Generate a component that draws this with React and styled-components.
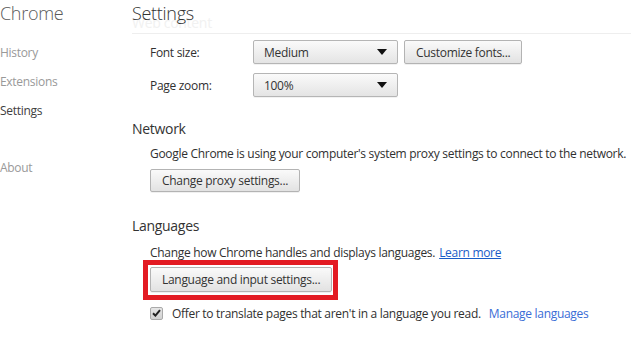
import React from 'react';
import styled, { createGlobalStyle } from 'styled-components';

const GlobalStyle = createGlobalStyle`
  html, body {
    margin: 0;
    padding: 0;
    background: #fff;
  }
  body {
    font-family: "Open Sans", "Noto Sans", "Liberation Sans", sans-serif;
    font-size: 12px;
    letter-spacing: -0.3px;
    color: #303030;
  }
`;

const Page = styled.div`
  display: flex;
  width: 631px;
  height: 340px;
  overflow: hidden;
`;

const Sidebar = styled.nav`
  width: 132px;
  flex-shrink: 0;
  display: flex;
  flex-direction: column;
`;

const Brand = styled.div`
  font-size: 18px;
  font-weight: 300;
  color: #5a5a5a;
  height: 26px;
  line-height: 26px;
  margin-bottom: 12px;
`;

const NavItem = styled.div`
  font-size: 12px;
  height: 29px;
  line-height: 29px;
  color: ${(p) => (p.active ? '#404040' : '#999')};
  margin-top: ${(p) => p.gap || 0}px;
`;

const Main = styled.main`
  flex: 1;
  display: flex;
  flex-direction: column;
`;

const Header = styled.header`
  position: relative;
  height: 33px;
  border-bottom: 1px solid #eee;
`;

const Title = styled.h1`
  position: relative;
  margin: 0;
  font-size: 18px;
  font-weight: 300;
  color: #333;
  height: 26px;
  line-height: 26px;
  z-index: 1;
`;

const Ghost = styled.div`
  position: absolute;
  left: 0;
  top: 13px;
  font-size: 14px;
  color: #f1f1f1;
`;

const Section = styled.section`
  display: flex;
  flex-direction: column;
  padding-left: 18px;
`;

const SectionTitle = styled.h2`
  margin: ${(p) => p.top || 0}px 0 0 -18px;
  font-size: 14px;
  font-weight: 400;
  color: #333;
  height: 24px;
  line-height: 24px;
`;

const Row = styled.div`
  display: flex;
  align-items: center;
  gap: 6px;
  margin-top: ${(p) => p.top || 0}px;
`;

const Label = styled.span`
  width: 97px;
`;

const Select = styled.div`
  box-sizing: border-box;
  width: 145px;
  height: 24px;
  padding: 0 10px;
  display: flex;
  align-items: center;
  justify-content: space-between;
  border: 1px solid #b5b5b5;
  border-radius: 2px;
  background: linear-gradient(#fafafa, #e4e4e4);
  box-shadow: 0 1px 0 rgba(0, 0, 0, 0.05);
  color: #333;
`;

const Arrow = styled.span`
  width: 0;
  height: 0;
  border-left: 5px solid transparent;
  border-right: 5px solid transparent;
  border-top: 6px solid #111;
`;

const Button = styled.button`
  box-sizing: border-box;
  height: ${(p) => p.h || 23}px;
  padding: 0 11px;
  font-family: inherit;
  font-size: 12px;
  letter-spacing: inherit;
  color: #333;
  border: 1px solid #b3b3b3;
  border-radius: 2px;
  background: linear-gradient(#fafafa, #e2e2e2);
  box-shadow: 0 1px 0 rgba(0, 0, 0, 0.06);
  align-self: flex-start;
  margin-top: ${(p) => p.top || 0}px;
`;

const Text = styled.div`
  height: 20px;
  line-height: 20px;
  white-space: nowrap;
  margin-top: ${(p) => p.top || 0}px;
`;

const Link = styled.a`
  color: ${(p) => (p.underline ? '#1a5cc8' : '#3a6dd6')};
  text-decoration: ${(p) => (p.underline ? 'underline' : 'none')};
  margin-left: ${(p) => p.left || 4}px;
`;

const Highlight = styled.div`
  align-self: flex-start;
  margin: -3px 0 0 -7px;
  border: 5px solid #e31b23;
  padding: 2px 1px 3px 2px;
  display: flex;
`;

const CheckRow = styled.label`
  display: flex;
  align-items: center;
  gap: 9px;
  margin-top: 3px;
  height: 20px;
  white-space: nowrap;
`;

const Box = styled.span`
  box-sizing: border-box;
  width: 13px;
  height: 13px;
  border: 1px solid #aaa;
  border-radius: 2px;
  background: linear-gradient(#e6e6e6, #d2d2d2);
  display: flex;
  align-items: center;
  justify-content: center;
`;

export default function App() {
  return (
    <>
      <GlobalStyle />
      <Page>
        <Sidebar>
          <Brand>Chrome</Brand>
          <NavItem>History</NavItem>
          <NavItem>Extensions</NavItem>
          <NavItem active>Settings</NavItem>
          <NavItem gap={28}>About</NavItem>
        </Sidebar>
        <Main>
          <Header>
            <Ghost>Web content</Ghost>
            <Title>Settings</Title>
          </Header>
          <Section>
            <Row top={6}>
              <Label>Font size:</Label>
              <Select>
                Medium
                <Arrow />
              </Select>
              <Button h={24}>Customize fonts...</Button>
            </Row>
            <Row top={9}>
              <Label>Page zoom:</Label>
              <Select>
                100%
                <Arrow />
              </Select>
            </Row>
          </Section>
          <Section>
            <SectionTitle top={20}>Network</SectionTitle>
            <Text top={3}>Google Chrome is using your computer's system proxy settings to connect to the network.</Text>
            <Button top={5}>Change proxy settings...</Button>
          </Section>
          <Section>
            <SectionTitle top={22}>Languages</SectionTitle>
            <Text top={5}>
              Change how Chrome handles and displays languages.
              <Link underline>Learn more</Link>
            </Text>
            <Highlight>
              <Button h={25}>Language and input settings...</Button>
            </Highlight>
            <CheckRow>
              <Box>
                <svg width="9" height="8" viewBox="0 0 9 8">
                  <path d="M1 4.2 L3.4 6.6 L8 1.2" fill="none" stroke="#222" strokeWidth="2" />
                </svg>
              </Box>
              <span>
                Offer to translate pages that aren't in a language you read.
                <Link left={8}>Manage languages</Link>
              </span>
            </CheckRow>
          </Section>
        </Main>
      </Page>
    </>
  );
}
